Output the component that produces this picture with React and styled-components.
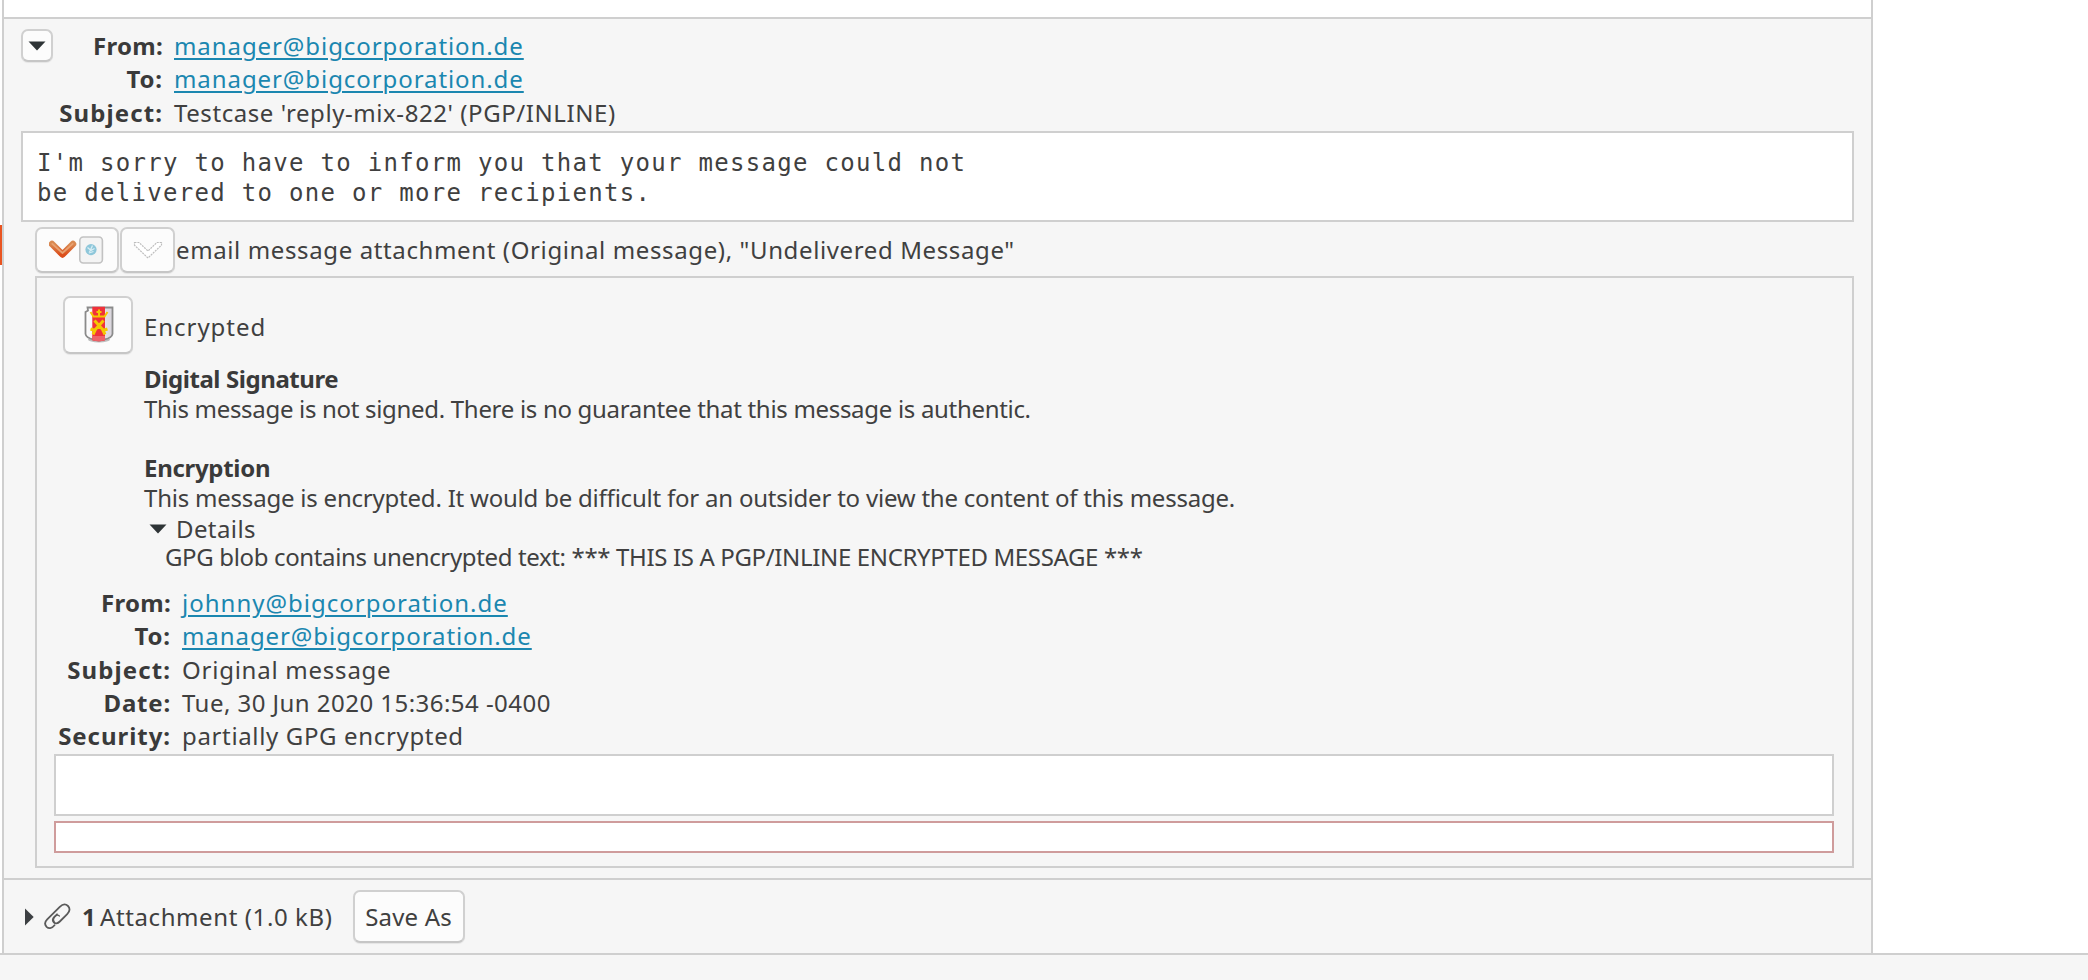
import React from "react";
import styled, { createGlobalStyle } from "styled-components";

const line = "#cfcfcf";
const panel = "#f6f6f6";

const GlobalStyle = createGlobalStyle`
  * { box-sizing: border-box; }
  body {
    margin: 0;
    background: #fff;
    color: #404040;
    font-family: "Noto Sans", "Open Sans", sans-serif;
    font-size: 24px;
    overflow: hidden;
  }
  svg { display: block; flex: none; }
`;

const Window = styled.div`
  display: flex;
  flex-direction: column;
  width: 2088px;
  height: 980px;
`;

const Main = styled.div`
  display: flex;
  height: 953px;
`;

const Gutter = styled.div`
  width: 2px;
  padding-top: 225px;
`;

const GutterMark = styled.div`
  height: 40px;
  background: #e95420;
`;

const StatusBar = styled.footer`
  flex: 1;
  background: ${panel};
  border-top: 2px solid ${line};
`;

const Pane = styled.main`
  display: flex;
  flex-direction: column;
  width: 1871px;
  background: ${panel};
  border-left: 2px solid ${line};
  border-right: 2px solid ${line};
`;

const PaneTop = styled.div`
  height: 19px;
  background: #fff;
  border-bottom: 2px solid ${line};
`;

const Message = styled.section`
  height: 861px;
  padding: 10px 17px 0;
  border-bottom: 2px solid ${line};
`;

const Header = styled.header`
  display: flex;
  align-items: flex-start;
  height: 102px;
`;

const Button = styled.button`
  display: flex;
  flex: none;
  align-items: center;
  justify-content: center;
  width: ${(p) => p.$w}px;
  height: ${(p) => p.$h}px;
  padding: 0;
  color: inherit;
  font: inherit;
  background: #fcfcfc;
  border: 2px solid #d0d0d0;
  border-bottom-color: #c6c6c6;
  border-radius: 7px;
  box-shadow: 0 1px 1px rgba(0, 0, 0, 0.07);
`;

const Fields = styled.dl`
  display: grid;
  grid-template-columns: ${(p) => p.$label}px auto;
  grid-auto-rows: 33.33px;
  column-gap: 11px;
  margin: 0;
  line-height: 33.33px;
  white-space: nowrap;
`;

const Term = styled.dt`
  color: #3a3a3a;
  font-weight: bold;
  text-align: right;
`;

const Value = styled.dd`
  margin: 0;
`;

const Run = styled.span`
  letter-spacing: ${(p) => p.$track || 0}px;
  white-space: nowrap;
`;

const Link = styled.a`
  color: #1b87b0;
  letter-spacing: ${(p) => p.$track}px;
  text-decoration: underline;
  text-decoration-thickness: 2px;
  text-underline-offset: 3px;
`;

const Box = styled.div`
  height: ${(p) => p.$h}px;
  background: #fff;
  border: 2px solid ${(p) => (p.$alert ? "#cf9c9c" : line)};
`;

const PlainText = styled.pre`
  margin: 0;
  padding: 16px 14px;
  font: 24px/29.6px "DejaVu Sans Mono", monospace;
  letter-spacing: 1.3px;
`;

const AttachedPart = styled.article`
  margin-left: 14px;
`;

const PartBar = styled.div`
  display: flex;
  align-items: center;
  gap: 1px;
  padding: 5px 0 3px;
`;

const PartTitle = styled(Run)`
  line-height: 46px;
`;

const PartFrame = styled.div`
  height: 592px;
  padding: 18px 18px 0 17px;
  border: 2px solid ${line};
`;

const Crypto = styled.div`
  display: flex;
  gap: 11px;
  height: 290px;
  padding-left: 9px;
`;

const CryptoInfo = styled.div`
  display: flex;
  flex-direction: column;
`;

const CryptoTitle = styled.div`
  height: 68px;
  line-height: 61px;
`;

const Paragraph = styled.p`
  display: flex;
  flex-direction: column;
  margin: 0 0 ${(p) => p.$after || 0}px;
  line-height: 29.5px;
`;

const Heading = styled.strong`
  color: #3a3a3a;
  letter-spacing: ${(p) => p.$track}px;
`;

const DetailsRow = styled.div`
  display: flex;
  align-items: center;
  gap: 9px;
  margin-top: 3px;
  padding-left: 5px;
  line-height: 28px;
`;

const DetailsText = styled(Run)`
  padding-left: 21px;
  line-height: 28px;
`;

const Boxes = styled.div`
  display: grid;
  gap: 5px;
  margin-top: 1px;
`;

const Attachments = styled.section`
  display: flex;
  align-items: center;
  height: 73px;
  padding-left: 21px;
`;

const ClipSlot = styled.span`
  margin-left: 10px;
`;

const Count = styled.b`
  width: 18px;
  margin-left: 11px;
  color: #3a3a3a;
`;

const SaveSlot = styled.div`
  margin-left: 20px;
`;

const TriangleDown = () => (
  <svg width="18" height="10" viewBox="0 0 18 10">
    <path d="M0.5 0.5H17.5L9 9.5Z" fill="#2e3436" />
  </svg>
);

const TriangleRight = () => (
  <svg width="9" height="18" viewBox="0 0 9 18">
    <path d="M0 0.5V17.5L8.7 9Z" fill="#3d4043" />
  </svg>
);

const PartStatusIcon = () => (
  <svg width="56" height="32" viewBox="1 0 56 32">
    <defs>
      <linearGradient id="chev" x1="0" y1="0" x2="0" y2="1">
        <stop offset="0" stopColor="#d98a52" />
        <stop offset="1" stopColor="#dc4f1c" />
      </linearGradient>
    </defs>
    <path d="M4 10L14.5 20.5L25 10" fill="none" stroke="url(#chev)" strokeWidth="6.5" strokeLinecap="round" strokeLinejoin="round" />
    <path d="M4.3 9.8L14.5 19L24.7 9.8" fill="none" stroke="#e9a272" strokeWidth="1.8" strokeLinecap="round" />
    <rect x="31.8" y="3" width="22.6" height="26" rx="3.5" fill="#f4f4f4" stroke="#c2c2c2" strokeWidth="1.6" />
    <circle cx="43" cy="15.6" r="5.6" fill="#8ec7da" />
    <path d="M39.5 13.5L42.5 16M44.5 11.5L42 17L46.5 14.5M41 19L45.5 17.5" fill="none" stroke="#d9eef5" strokeWidth="1.3" />
  </svg>
);

const ChevronOutline = () => (
  <svg width="30" height="20" viewBox="0 0 30 20">
    <path
      d="M1.5 2.5H6L15 11L24 2.5H28.5V5.2L15 18L1.5 5.2Z"
      fill="#fff"
      stroke="#bdbdbd"
      strokeWidth="1.2"
      strokeDasharray="2 0.9"
    />
  </svg>
);

const CrestIcon = () => (
  <svg width="32" height="38" viewBox="-2 0 32 38">
    <defs>
      <linearGradient id="shield" x1="0" y1="0" x2="1" y2="0">
        <stop offset="0" stopColor="#ffffff" />
        <stop offset="1" stopColor="#d9d5dc" />
      </linearGradient>
    </defs>
    <ellipse cx="15" cy="33.5" rx="11" ry="3" fill="#000" opacity="0.25" />
    <path d="M3.5 1.5H28.5V28Q28 32 20 33.5Q15 35.5 10 33.5Q2 32 1.5 28V6L4 4.5Z" fill="url(#shield)" stroke="#8b8b8b" strokeWidth="1.8" />
    <path d="M8.3 0.8H21V34.2Q15 36.5 8.3 34.2Z" fill="#f0313a" />
    <path d="M8.3 30H21V34.2Q15 36.5 8.3 34.2Z" fill="#ee6269" />
    <path d="M6.5 6L9.5 10.5H20.5L23.5 6M15 3.5V10M12.5 6H17.5" fill="none" stroke="#f4c800" strokeWidth="2" />
    <path d="M10.5 14.5L20 25M19.5 14.5L10 25M15 17V23M6.5 23L11 24.5L9 28.5M23.5 23L19 24.5L21 28.5" fill="none" stroke="#f4c800" strokeWidth="3" />
  </svg>
);

const PaperclipIcon = () => (
  <svg width="27" height="27" viewBox="0 0 27 27">
    <g fill="none" stroke="#5a5a5a" strokeWidth="1.8" strokeLinecap="round">
      <path d="M10.5 22.3C7.8 25.8 4.5 25.6 2.6 23.8C0.5 21.6 0.8 18.8 3.2 16.4L15.8 3.8C18.6 1 21.8 0.8 24 3C26.2 5.2 26 8.3 23.2 11.1L15.8 18.5C13.6 20.7 11.2 20.8 9.8 19.4C8.3 17.9 8.4 15.7 10.3 13.8L13 11.3" />
      <path d="M10.2 18.7C9 16.9 9.6 15 11.2 13.4C12.8 11.8 14.4 12 15.4 13" strokeWidth="1.2" />
    </g>
  </svg>
);

const Field = ({ label, labelTrack, track, link, children }) => (
  <>
    <Term>
      <Run $track={labelTrack}>{label}</Run>
    </Term>
    <Value>{link ? <Link $track={track}>{children}</Link> : <Run $track={track}>{children}</Run>}</Value>
  </>
);

export default function App() {
  return (
    <>
      <GlobalStyle />
      <Window>
        <Main>
          <Gutter>
            <GutterMark />
          </Gutter>
          <Pane>
            <PaneTop />
            <Message>
              <Header>
                <Button $w={32} $h={33} aria-label="Collapse headers">
                  <TriangleDown />
                </Button>
                <Fields $label={110}>
                  <Field label="From:" labelTrack={0.3} track={0.92} link>
                    manager@bigcorporation.de
                  </Field>
                  <Field label="To:" labelTrack={0.9} track={0.92} link>
                    manager@bigcorporation.de
                  </Field>
                  <Field label="Subject:" labelTrack={1.1} track={0.57}>
                    Testcase 'reply-mix-822' (PGP/INLINE)
                  </Field>
                </Fields>
              </Header>
              <Box $h={91}>
                <PlainText>{"I'm sorry to have to inform you that your message could not\nbe delivered to one or more recipients."}</PlainText>
              </Box>
              <AttachedPart>
                <PartBar>
                  <Button $w={84} $h={46} aria-label="Part status">
                    <PartStatusIcon />
                  </Button>
                  <Button $w={55} $h={46} aria-label="Part options">
                    <ChevronOutline />
                  </Button>
                  <PartTitle $track={0.62}>email message attachment (Original message), "Undelivered Message"</PartTitle>
                </PartBar>
                <PartFrame>
                  <Crypto>
                    <Button $w={70} $h={58} aria-label="Encryption status">
                      <CrestIcon />
                    </Button>
                    <CryptoInfo>
                      <CryptoTitle>
                        <Run $track={0.95}>Encrypted</Run>
                      </CryptoTitle>
                      <Paragraph $after={30}>
                        <Heading $track={-0.42}>Digital Signature</Heading>
                        <Run $track={-0.31}>
                          This message is not signed. There is no guarantee that this message is authentic.
                        </Run>
                      </Paragraph>
                      <Paragraph>
                        <Heading $track={-0.3}>Encryption</Heading>
                        <Run $track={-0.215}>
                          This message is encrypted. It would be difficult for an outsider to view the content of this message.
                        </Run>
                      </Paragraph>
                      <DetailsRow>
                        <TriangleDown />
                        <Run $track={0.4}>Details</Run>
                      </DetailsRow>
                      <DetailsText $track={-0.355}>
                        GPG blob contains unencrypted text: *** THIS IS A PGP/INLINE ENCRYPTED MESSAGE ***
                      </DetailsText>
                    </CryptoInfo>
                  </Crypto>
                  <Fields $label={117}>
                    <Field label="From:" labelTrack={0.3} track={1.0} link>
                      johnny@bigcorporation.de
                    </Field>
                    <Field label="To:" labelTrack={0.9} track={0.92} link>
                      manager@bigcorporation.de
                    </Field>
                    <Field label="Subject:" labelTrack={1.1} track={0.76}>
                      Original message
                    </Field>
                    <Field label="Date:" labelTrack={0.8} track={0.46}>
                      Tue, 30 Jun 2020 15:36:54 -0400
                    </Field>
                    <Field label="Security:" labelTrack={0.95} track={0.65}>
                      partially GPG encrypted
                    </Field>
                  </Fields>
                  <Boxes>
                    <Box $h={62} />
                    <Box $h={32} $alert />
                  </Boxes>
                </PartFrame>
              </AttachedPart>
            </Message>
            <Attachments>
              <TriangleRight />
              <ClipSlot>
                <PaperclipIcon />
              </ClipSlot>
              <Count>1</Count>
              <Run $track={0.6}>Attachment (1.0 kB)</Run>
              <SaveSlot>
                <Button $w={112} $h={53}>
                  <Run $track={0.2}>Save As</Run>
                </Button>
              </SaveSlot>
            </Attachments>
          </Pane>
        </Main>
        <StatusBar />
      </Window>
    </>
  );
}
